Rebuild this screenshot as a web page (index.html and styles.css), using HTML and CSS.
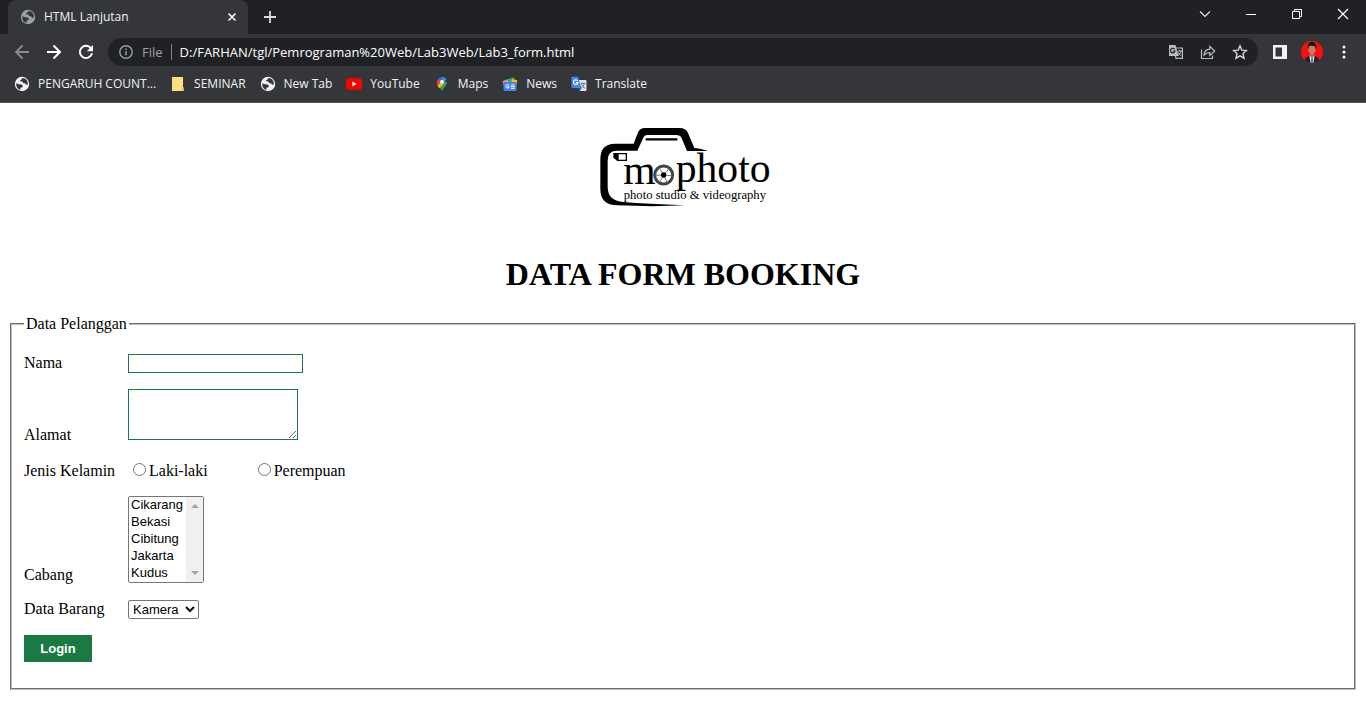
FILE: index.html
```html
<!DOCTYPE html>
<html lang="id">
<head>
<meta charset="utf-8">
<title>HTML Lanjutan</title>
<link rel="stylesheet" href="styles.css">
</head>
<body>
<svg class="defs" aria-hidden="true">
  <symbol id="globe" viewBox="0 0 16 16">
    <circle cx="8" cy="8" r="7.2" fill="currentColor"/>
    <path class="land" d="M2.2 7.2 5 8.2l2.6.3 1.3 1.2-.5 1.5-1.9.6-.3 2.1C3.500 13.100 1.900 10.500 2.200 7.200zM8.600 2.100l-1 1.300-1.500.5.2 1.400 1.900.3 1 1.500 2 .4 1 1.300 1.600-.3C14.200 5.200 12 2.300 8.600 2.100z"/>
  </symbol>
</svg>
<header class="browser">
  <div class="tabstrip">
    <div class="tab">
      <svg class="icon dim" viewBox="0 0 16 16"><use href="#globe"/></svg>
      <span class="tab-title">HTML Lanjutan</span>
      <button class="plain" aria-label="Tutup tab"><svg class="icon" viewBox="0 0 16 16"><path d="M4.500 4.500l7 7m0-7l-7 7" stroke="#fff" stroke-width="1.600"/></svg></button>
    </div>
    <button class="plain new-tab" aria-label="Tab baru"><svg class="icon" viewBox="0 0 16 16"><path d="M8 2v12M2 8h12" stroke="#dcdde0" stroke-width="1.800"/></svg></button>
    <div class="window-buttons">
      <button class="plain" aria-label="Cari tab"><svg class="icon" viewBox="0 0 16 16"><path d="M3 5.500l5 5 5-5" fill="none" stroke="#e8eaed" stroke-width="1.100"/></svg></button>
      <button class="plain" aria-label="Minimalkan"><svg class="icon" viewBox="0 0 16 16"><path d="M3 8.500h10" stroke="#fff"/></svg></button>
      <button class="plain" aria-label="Pulihkan"><svg class="icon" viewBox="0 0 16 16"><path d="M3.500 5.500h7v7h-7zM5.500 5.500v-2h7v7h-2" fill="none" stroke="#fff"/></svg></button>
      <button class="plain" aria-label="Tutup"><svg class="icon" viewBox="0 0 16 16"><path d="M3 3l10 10m0-10L3 13" stroke="#fff" stroke-width="1.200"/></svg></button>
    </div>
  </div>
  <div class="toolbar">
    <button class="plain" aria-label="Kembali"><svg class="icon" viewBox="0 0 16 16"><path d="M15 8H2m6.500-6.500L2 8l6.500 6.500" fill="none" stroke="#8a8b8e" stroke-width="1.800"/></svg></button>
    <button class="plain" aria-label="Maju"><svg class="icon" viewBox="0 0 16 16"><path d="M1 8h13M7.500 1.500L14 8l-6.500 6.500" fill="none" stroke="#fff" stroke-width="2"/></svg></button>
    <button class="plain" aria-label="Muat ulang"><svg class="icon" viewBox="0 0 16 16"><path d="M13.200 4.700A6.100 6.100 0 1 0 14 9.200" fill="none" stroke="#fff" stroke-width="2"/><path d="M15 1v6.200H8.800z" fill="#fff"/></svg></button>
    <div class="omnibox">
      <svg class="icon" viewBox="0 0 16 16"><circle cx="8" cy="8" r="6.200" fill="none" stroke="#9aa0a6" stroke-width="1.400"/><path d="M8 7.200v4M8 4.600v1.500" stroke="#9aa0a6" stroke-width="1.500"/></svg>
      <span class="scheme">File</span>
      <input class="url" aria-label="Alamat situs" value="D:/FARHAN/tgl/Pemrograman%20Web/Lab3Web/Lab3_form.html">
      <button class="plain" aria-label="Terjemahkan"><svg class="icon" viewBox="0 0 16 16"><path d="M6 4h8.400v10.400H8z" fill="none" stroke="#b9bcc0" stroke-width="1.200"/><path d="M1 1h6.500l3 11H1z" fill="#b9bcc0"/><path d="M6.600 5.200A2.300 2.300 0 1 0 7 7H4.800" fill="none" stroke="#202124" stroke-width="1.200"/><path d="M9.500 7h4.500M11.700 6v1M13 7c-.4 2-1.500 3.500-3 4.500M10 8c.7 1.600 1.800 2.900 3.300 3.700" fill="none" stroke="#b9bcc0"/></svg></button>
      <button class="plain" aria-label="Bagikan"><svg class="icon" viewBox="0 0 16 16"><path d="M1.500 5.500v9h11v-3M4 11c.3-4 2.500-5.700 5.800-5.900V2.300L14.700 7l-4.900 4.400V8.700C7.300 8.600 5.500 9.300 4 11z" fill="none" stroke="#b9bcc0" stroke-width="1.200"/></svg></button>
      <button class="plain" aria-label="Tandai"><svg class="icon" viewBox="0 0 16 16"><path d="M8 1.800l1.800 4.300 4.700.4-3.500 3.100 1 4.600L8 11.800l-4 2.400 1-4.600-3.500-3.100 4.700-.4z" fill="none" stroke="#d4d6d9" stroke-width="1.400"/></svg></button>
    </div>
    <button class="plain" aria-label="Panel samping"><svg class="icon" viewBox="0 0 16 16"><path d="M1 1h14v14H1zM3.500 3.500v9H10v-9z" fill="#f1f3f4" fill-rule="evenodd"/></svg></button>
    <button class="plain profile" aria-label="Profil"><svg class="avatar" viewBox="0 0 22 22"><clipPath id="round"><circle cx="11" cy="11" r="11"/></clipPath><g clip-path="url(#round)"><path d="M0 0h22v22H0z" fill="#f90f0f"/><path d="M3.500 22l1-5L9 14.500h4l4.500 2.500 1 5z" fill="#202330"/><path d="M8.500 14.500h5L12.500 22h-3z" fill="#e9edf2"/><path d="M10.300 16h1.500l.6 6h-2.700z" fill="#66758f"/><path d="M9 11h4v4l-2 1.500L9 15z" fill="#a8694d"/><ellipse cx="11" cy="8.500" rx="3.500" ry="5" fill="#bd8060"/><path d="M7 8C6 3 8 1 11 1s5 2 4 7c-.7-2-1-3-2-3.300-2 .4-3 .1-4-.1C8 5 7.500 6 7 8z" fill="#17141a"/></g></svg></button>
    <button class="plain" aria-label="Menu"><svg class="icon" viewBox="0 0 16 16"><g fill="#fff"><circle cx="8" cy="3" r="1.500"/><circle cx="8" cy="8" r="1.500"/><circle cx="8" cy="13" r="1.500"/></g></svg></button>
  </div>
  <nav class="bookmarks">
    <a href="#"><svg class="icon" viewBox="0 0 16 16"><use href="#globe"/></svg>PENGARUH COUNT...</a>
    <a href="#"><svg class="icon" viewBox="0 0 16 16"><path d="M2 1h11v10.500l1 3.500H2z" fill="#fde07d"/><path d="M12.600 11.200v3.800H14v-3.800z" fill="#d9b13f"/></svg>SEMINAR</a>
    <a href="#"><svg class="icon" viewBox="0 0 16 16"><use href="#globe"/></svg>New Tab</a>
    <a href="#"><svg class="icon" viewBox="0 0 16 16"><rect y="2.200" width="16" height="11.600" rx="3" fill="#f00"/><path d="M6.300 5.500v5l4.200-2.500z" fill="#fff"/></svg>YouTube</a>
    <a href="#"><svg class="icon" viewBox="0 0 16 16"><path d="M8 15.500c-.4-3-4.900-5.500-4.900-9.700h9.800C12.900 10 8.400 12.500 8 15.500z" fill="#34a853"/><path d="M3.700 8.700C2.500 6.400 3 4.300 4.200 2.900L8 6z" fill="#ea4335"/><path d="M4.200 2.900C5.400 1.200 7.500.300 9.500.900L6.300 5z" fill="#1a73e8"/><path d="M9.500.9c1.300.4 2.300 1.200 2.900 2.500L8.200 8.200 6.300 5z" fill="#4285f4"/><path d="M6.400 7l-2.700 3C2.900 8.500 2.900 7 3.200 5.500L6 4z" fill="#ea4335"/><path d="M9.700 7.200l-4.500 5.200L3.700 9.800l2.700-3z" fill="#fbbc04"/><circle cx="8" cy="5.800" r="1.900" fill="#fff"/></svg>Maps</a>
    <a href="#"><svg class="icon" viewBox="0 0 16 16"><path d="M3 4l9-2.700 1 4L4 8z" fill="#34a853"/><path d="M.6 5l5-1.600L7 9l-5 1z" fill="#ea8b83"/><path d="M10 3l5.400 1.300L14.500 9 9 8z" fill="#fbbc04"/><rect x="1.500" y="6" width="13" height="9" rx="1" fill="#4285f4"/><path d="M7 9.400a1.700 1.700 0 1 0 .2 1.400H5.600M9 9h3.500M9 10.700h4M9 12.400h3.500" fill="none" stroke="#fff"/></svg>News</a>
    <a href="#"><svg class="icon" viewBox="0 0 16 16"><path d="M6 4h8.500q1 0 1 1v9q0 1-1 1H9z" fill="#dfe3e8"/><path d="M1.500.8H7L10.500 12h-9q-1 0-1-1V1.800q0-1 1-1z" fill="#4285f4"/><path d="M7.500 12h3L9 15z" fill="#1967d2"/><path d="M6.600 4.800A2.300 2.300 0 1 0 7 6.600H4.800" fill="none" stroke="#fff" stroke-width="1.100"/><path d="M9.500 7.500h5M12 6.500v1M13.300 7.500c-.4 2-1.500 3.500-3 4.500M10.500 8.500c.7 1.600 1.800 2.900 3.300 3.700" fill="none" stroke="#617d8b"/></svg>Translate</a>
  </nav>
</header>
<main class="page">
  <svg class="logo" viewBox="-21 -12 600 372" role="img" aria-label="mophoto photo studio &amp; videography">
    <path d="M355 108Q325 99 313 99L294 54Q288 39 268 39H166Q148 39 143 55L131 86H76Q31 86 31 132V222Q31 271 82 271Q190 276 285 271Q170 267 100 261Q53 257 53 216V136Q53 107 81 107H142L161 66Q164 60 172 60H258Q271 60 275 70L291 108Z"/>
    <path d="M167 73H262" stroke="#000" stroke-width="7"/>
    <path d="M70 114H111V138H82L70 128zM86 118V134H107V118z" fill-rule="evenodd"/>
    <text class="name" x="100" y="208">m</text>
    <text class="name" x="257" y="200">photo</text>
    <circle cx="221" cy="180" r="27" fill="#fff" stroke="#444" stroke-width="9"/>
    <path d="M221 180L207 158M221 180L238 160M221 180L246 182M221 180L232 203M221 180L209 202M221 180L196 181" stroke="#777" stroke-width="3"/>
    <circle cx="221" cy="180" r="8"/>
    <text class="tagline" x="101" y="251">photo studio &amp; videography</text>
  </svg>
  <h1>DATA FORM BOOKING</h1>
  <form>
    <fieldset>
      <legend>Data Pelanggan</legend>
      <p><label class="caption" for="nama">Nama</label><input class="field" type="text" id="nama"></p>
      <p><label class="caption" for="alamat">Alamat</label><textarea class="field" id="alamat"></textarea></p>
      <p><span class="caption">Jenis Kelamin</span><span class="choices"><label><input type="radio" name="jk" value="l">Laki-laki</label><label><input type="radio" name="jk" value="p">Perempuan</label></span></p>
      <p><label class="caption" for="cabang">Cabang</label><span class="listbox"><select class="branches" id="cabang" size="5">
        <option>Cikarang</option><option>Bekasi</option><option>Cibitung</option><option>Jakarta</option><option>Kudus</option>
      </select><span class="scroll"><svg viewBox="0 0 8 4"><path d="M0 4l4-4 4 4z"/></svg><svg viewBox="0 0 8 4"><path d="M0 0l4 4 4-4z"/></svg></span></span></p>
      <p><label class="caption" for="barang">Data Barang</label><select class="goods" id="barang"><option>Kamera</option></select></p>
      <p><button class="login" type="button">Login</button></p>
    </fieldset>
  </form>
</main>
</body>
</html>
```
FILE: styles.css
```css
body {
  margin: 0;
  background: #fff;
  color: #000;
  font: 16px/18px "Liberation Serif", serif;
}
.defs { position: absolute; width: 0; height: 0; }
.land { fill: #35363a; }
.icon { display: block; width: 16px; height: 16px; flex: none; }
.dim { color: #9aa0a6; }
.plain { padding: 0; border: 0; background: none; }

.browser {
  background: #35363a;
  border-bottom: 1px solid #55565a;
  color: #f1f3f4;
  font: 12px/16px "Open Sans", "Noto Sans", sans-serif;
}
.tabstrip {
  display: flex;
  align-items: center;
  height: 34px;
  padding: 0 15px 0 8px;
  background: #202124;
}
.tab {
  display: flex;
  align-items: center;
  gap: 8px;
  box-sizing: border-box;
  width: 240px;
  height: 34px;
  padding: 0 8px 0 12px;
  border-radius: 8px 8px 0 0;
  background: #35363a;
}
.tab-title { flex: 1; }
.new-tab { margin-left: 14px; }
.window-buttons {
  display: flex;
  gap: 30px;
  margin-left: auto;
  padding-bottom: 6px;
}
.toolbar {
  display: flex;
  align-items: center;
  gap: 16px;
  height: 36px;
  padding: 0 14px;
}
.omnibox {
  display: flex;
  flex: 1;
  align-items: center;
  gap: 16px;
  height: 28px;
  margin: 0 -2px;
  padding: 0 10px;
  border-radius: 14px;
  background: #202124;
  font-size: 13px;
}
.scheme {
  margin-left: -8px;
  padding-right: 8px;
  border-right: 1px solid #80868b;
  color: #9aa0a6;
}
.url {
  flex: 1;
  min-width: 0;
  margin-left: -8px;
  padding: 0;
  border: 0;
  background: none;
  color: #fff;
  font: inherit;
}
.profile { margin: 0 -3px; }
.avatar { display: block; width: 22px; height: 22px; }
.bookmarks {
  display: flex;
  align-items: center;
  gap: 14px;
  height: 32px;
  padding: 0 14px;
}
.bookmarks a {
  display: flex;
  align-items: center;
  gap: 8px;
  padding-bottom: 4px;
  color: inherit;
  text-decoration: none;
}

.page { padding: 8px; }
.logo { display: block; width: 200px; height: 124px; margin: 0 auto; }
.name { font: 125px "Liberation Serif", serif; }
.tagline { font: 38px "Liberation Serif", serif; }
h1 {
  margin: 21px 0;
  font-size: 32px;
  line-height: 37px;
  text-align: center;
}
fieldset {
  margin: 0 2px;
  padding: 4px 12px 10px;
  border: 2px groove #c0c0c0;
}
legend { padding: 0 2px; line-height: 20px; }
p { margin: 16px 0; }
.caption { display: inline-block; width: 104px; }
.field {
  box-sizing: border-box;
  margin: 0;
  border: 1px solid #1b7a43;
  background: #fff;
}
input.field { width: 175px; height: 19px; }
textarea.field { width: 170px; height: 51px; }
.choices { display: inline-flex; gap: 50px; }
.choices input { margin: 3px 3px 0 5px; }
.choices label + label input { margin-left: 0; }
.listbox { display: inline-block; position: relative; }
.branches, .goods { font: 13px/15px "Liberation Sans", sans-serif; }
.branches {
  box-sizing: border-box;
  width: 76px;
  height: 87px;
  margin: 0;
  padding: 0;
  border: 1px solid #767676;
  border-radius: 2px;
  overflow: hidden;
}
.branches option { min-height: 15px; padding: 0 2px 2px; }
.scroll {
  display: flex;
  flex-direction: column;
  justify-content: space-between;
  align-items: center;
  position: absolute;
  top: 1px;
  right: 1px;
  width: 17px;
  height: 85px;
  box-sizing: border-box;
  padding: 7px 0;
  background: #f0f0f0;
  pointer-events: none;
}
.scroll svg { width: 8px; height: 4px; fill: #a3a3a3; }
.goods {
  width: 71px;
  height: 19px;
  margin: 0;
  border: 1px solid #767676;
  border-radius: 2px;
  background: #fff;
}
.login {
  min-width: 68px;
  padding: 5px 16px;
  border: 0;
  background: #1b7a43;
  color: #fff;
  font: bold 13px/17px "Liberation Sans", sans-serif;
}
```
